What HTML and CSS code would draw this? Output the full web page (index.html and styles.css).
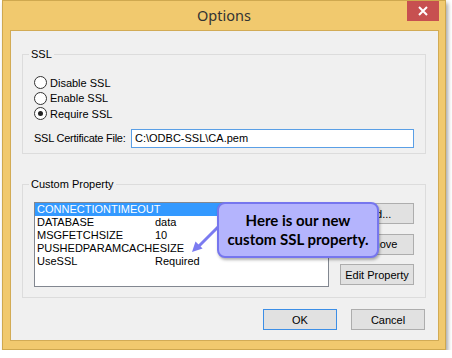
FILE: index.html
```html
<!DOCTYPE html>
<html lang="en">
<head>
  <meta charset="UTF-8">
  <title>Options</title>
  <link rel="stylesheet" href="styles.css">
</head>
<body>
  <div class="window">
    <div class="titlebar">
      <span></span>
      <span class="title">Options</span>
      <button class="close" type="button">
        <svg width="10" height="10" viewBox="0 0 10 10"><path d="M1 1 L9 9 M9 1 L1 9" stroke="#fff" stroke-width="2"/></svg>
      </button>
    </div>

    <div class="client">
      <!-- SSL -->
      <div class="group ssl-group">
        <span class="group-label">SSL</span>
        <div class="radios">
          <label class="radio"><span class="dot"></span>Disable SSL</label>
          <label class="radio"><span class="dot"></span>Enable SSL</label>
          <label class="radio"><span class="dot checked"></span>Require SSL</label>
        </div>
        <div class="cert-row">
          <span class="cert-label">SSL Certificate File:</span>
          <div class="textbox">C:\ODBC-SSL\CA.pem</div>
        </div>
      </div>

      <!-- Custom Property -->
      <div class="group custom-group">
        <span class="group-label">Custom Property</span>
        <div class="listbox">
          <div class="row selected"><span class="name">CONNECTIONTIMEOUT</span><span></span></div>
          <div class="row"><span class="name">DATABASE</span><span>data</span></div>
          <div class="row"><span class="name">MSGFETCHSIZE</span><span>10</span></div>
          <div class="row"><span class="name">PUSHEDPARAMCACHESIZE</span><span></span></div>
          <div class="row"><span class="name">UseSSL</span><span>Required</span></div>
        </div>
        <div class="side-buttons">
          <button class="btn" type="button">Add...</button>
          <button class="btn" type="button">Remove</button>
          <button class="btn" type="button">Edit Property</button>
        </div>
      </div>

      <div class="dialog-buttons">
        <button class="btn default" type="button">OK</button>
        <button class="btn" type="button">Cancel</button>
      </div>

      <!-- callout -->
      <svg class="arrow" width="40" height="36" viewBox="0 0 40 36">
        <path d="M32 6 L11 27" stroke="#7b7bf0" stroke-width="3"/>
        <polygon points="5,32 15.6,28.5 8.5,21.4" fill="#7b7bf0"/>
      </svg>
      <div class="callout">Here is our new<br>custom SSL property.</div>
    </div>
  </div>
</body>
</html>
```

FILE: styles.css
```css
body {
  margin: 0;
  background: #fff;
  font-family: "Liberation Sans", Arial, sans-serif;
  font-size: 11px;
  color: #000;
}
.window {
  margin-left: 2px;
  width: 444px;
  height: 350px;
  box-sizing: border-box;
  background: #f1c96e;
  border: 1px solid #cfa84f;
  box-shadow: 2px 3px 4px rgba(0, 0, 0, 0.35);
}
.titlebar {
  height: 29px;
  display: grid;
  grid-template-columns: 1fr auto 1fr;
  align-items: start;
}
.title {
  font-family: "Noto Sans", sans-serif;
  font-size: 14.5px;
  color: #333;
  line-height: 29px;
}
.close {
  justify-self: end;
  margin-right: 6px;
  width: 32px;
  height: 20px;
  border: none;
  padding: 0;
  background: #c75050;
  display: flex;
  align-items: center;
  justify-content: center;
}
.client {
  margin: 0 6px 0 7px;
  height: 311px;
  box-sizing: border-box;
  border: 1px solid #d2ab55;
  background: #f0f0f0;
  position: relative;
  display: flex;
  flex-direction: column;
}
.group {
  margin-left: 11px;
  width: 404px;
  box-sizing: border-box;
  border: 1px solid #dcdcdc;
  position: relative;
}
.group-label {
  position: absolute;
  top: -8px;
  left: 6px;
  padding: 0 2px;
  background: #f0f0f0;
  line-height: 14px;
}
.ssl-group {
  margin-top: 23px;
  height: 100px;
  padding: 20px 0 0 11px;
}
.radios {
  display: flex;
  flex-direction: column;
}
.radio {
  height: 15.5px;
  display: flex;
  align-items: center;
  gap: 3px;
}
.dot {
  width: 11px;
  height: 11px;
  border: 1px solid #333;
  border-radius: 50%;
  background: #fff;
  display: flex;
  align-items: center;
  justify-content: center;
}
.dot.checked::after {
  content: "";
  width: 5px;
  height: 5px;
  border-radius: 50%;
  background: #222;
}
.cert-row {
  margin-top: 7px;
  display: flex;
  align-items: center;
}
.cert-label {
  width: 97px;
  letter-spacing: -0.25px;
}
.textbox {
  width: 283px;
  height: 19px;
  box-sizing: border-box;
  border: 1px solid #5a9fe6;
  background: #fff;
  padding-left: 3px;
  line-height: 17px;
}
.custom-group {
  margin-top: 30px;
  height: 114px;
  padding: 17px 0 0 11px;
  display: flex;
  gap: 11px;
}
.listbox {
  width: 295px;
  height: 85px;
  box-sizing: border-box;
  border: 1px solid #828790;
  background: #fff;
  padding: 0;
}
.row {
  height: 13px;
  line-height: 13px;
  display: flex;
  padding-left: 2px;
}
.row .name {
  width: 118px;
}
.row.selected {
  background: #3399ff;
  color: #fff;
}
.side-buttons {
  display: flex;
  flex-direction: column;
  gap: 9.5px;
  padding-top: 1px;
}
.btn {
  width: 74px;
  height: 21px;
  padding: 0;
  border: 1px solid #adadad;
  background: #e1e1e1;
  font-family: "Liberation Sans", Arial, sans-serif;
  font-size: 11px;
  color: #000;
}
.btn.default {
  border-color: #3c8ee6;
}
.dialog-buttons {
  margin-top: 11px;
  padding-right: 13px;
  display: flex;
  justify-content: flex-end;
  gap: 14px;
}
.arrow {
  position: absolute;
  left: 176px;
  top: 189px;
}
.callout {
  position: absolute;
  left: 206px;
  top: 171px;
  width: 162px;
  height: 56px;
  box-sizing: border-box;
  border: 2px solid #7676ee;
  border-radius: 8px;
  background: #b4b4fd;
  box-shadow: 1px 2px 3px rgba(0, 0, 0, 0.3);
  font-family: Lato, sans-serif;
  font-weight: bold;
  font-size: 15px;
  line-height: 19px;
  text-align: center;
  padding-top: 7px;
}
```
